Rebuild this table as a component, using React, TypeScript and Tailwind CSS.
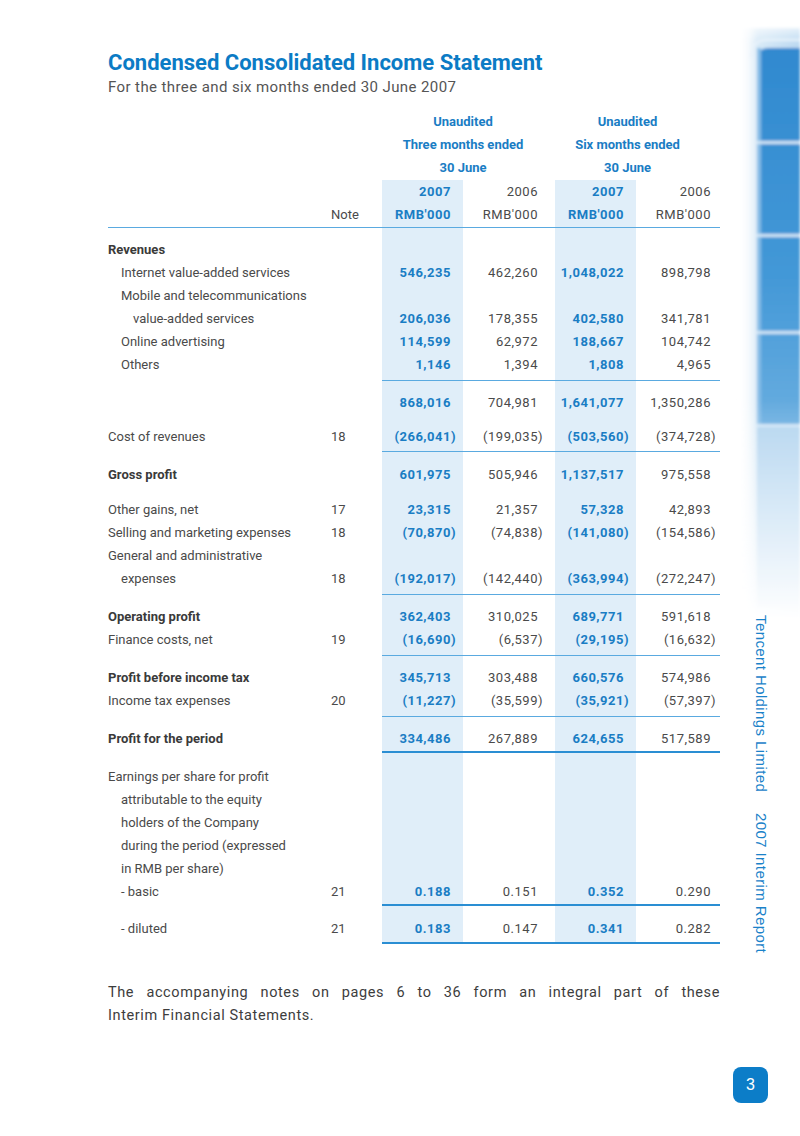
import React from "react";

type Vals = [string, string, string, string];

const COLS = "grid grid-cols-[223px_51px_81px_92px_81px_84px]";
const SHADE = "bg-[#e0eef9]";
const BLUE = "text-[#1a7dc4]";
const GRAY = "text-[#4a4a4a]";

// Number cell: closing paren hangs outside the column edge, like the print layout
function Num({ value, bold, pad }: { value: string; bold?: boolean; pad: string }) {
  const neg = value.endsWith(")");
  const body = neg ? value.slice(0, -1) : value;
  return (
    <div className={`flex justify-end items-center tracking-[0.5px] ${pad} ${bold ? `font-bold ${BLUE}` : GRAY}`}>
      <span>{body}</span>
      <span className={neg ? "" : "invisible"}>)</span>
    </div>
  );
}

function Row({
  label,
  indent = 0,
  bold,
  note,
  v,
}: {
  label?: string;
  indent?: 0 | 1 | 2;
  bold?: boolean;
  note?: string;
  v?: Vals;
}) {
  const ind = indent === 2 ? "pl-[25px]" : indent === 1 ? "pl-[13px]" : "";
  return (
    <div className={`${COLS} h-[23px] leading-[23px]`}>
      <div className={`${ind} ${bold ? "font-bold text-[#3a3a3a]" : GRAY} whitespace-nowrap`}>{label}</div>
      <div className={GRAY}>{note}</div>
      <div className={SHADE}>{v && <Num value={v[0]} bold pad="pr-[7px]" />}</div>
      <div>{v && <Num value={v[1]} pad="pr-[12px]" />}</div>
      <div className={SHADE}>{v && <Num value={v[2]} bold pad="pr-[7px]" />}</div>
      <div>{v && <Num value={v[3]} pad="pr-[4px]" />}</div>
    </div>
  );
}

function Gap({ h }: { h: string }) {
  return (
    <div className={`${COLS} ${h}`}>
      <div />
      <div />
      <div className={SHADE} />
      <div />
      <div className={SHADE} />
      <div />
    </div>
  );
}

function Rule({ thick, full }: { thick?: boolean; full?: boolean }) {
  return (
    <div className={COLS}>
      {!full && <div className="col-span-2" />}
      <div
        className={`${full ? "col-span-6" : "col-span-4"} ${
          thick ? "h-[2px] bg-[#2a8ed3]" : "h-px bg-[#5aaae0]"
        }`}
      />
    </div>
  );
}

function SideArt() {
  return (
    <svg className="absolute left-[735px] top-[20px]" width="65" height="600" viewBox="0 0 65 600">
      <defs>
        <linearGradient id="glowX" x1="0" x2="1" y1="0" y2="0">
          <stop offset="0" stopColor="#ffffff" stopOpacity="0" />
          <stop offset="0.3" stopColor="#d9eaf7" />
          <stop offset="1" stopColor="#bcd9f1" />
        </linearGradient>
        <linearGradient id="panel" x1="0" x2="0" y1="0" y2="1">
          <stop offset="0" stopColor="#3089cf" />
          <stop offset="0.6" stopColor="#4398d7" />
          <stop offset="1" stopColor="#6aaee0" />
        </linearGradient>
        <linearGradient id="fadeY" x1="0" x2="0" y1="0" y2="1">
          <stop offset="0" stopColor="#ffffff" stopOpacity="0" />
          <stop offset="1" stopColor="#ffffff" stopOpacity="1" />
        </linearGradient>
        <linearGradient id="fadeTop" x1="0" x2="0" y1="0" y2="1">
          <stop offset="0" stopColor="#ffffff" stopOpacity="1" />
          <stop offset="1" stopColor="#ffffff" stopOpacity="0" />
        </linearGradient>
        <filter id="soft" x="-20%" y="-5%" width="140%" height="110%">
          <feGaussianBlur stdDeviation="1.8" />
        </filter>
      </defs>
      <g filter="url(#soft)">
        <rect x="4" y="8" width="61" height="590" fill="url(#glowX)" />
        <path d="M22 40 Q22 28 34 28 L65 28 L65 410 L22 410 Z" fill="url(#panel)" />
        <path d="M16 38 Q16 20 32 20 L65 20" stroke="#e9f3fb" strokeWidth="2" fill="none" />
        <rect x="22" y="28" width="4" height="382" fill="#86bde7" />
        <rect x="22" y="121" width="43" height="3" fill="#d3e7f7" />
        <rect x="22" y="214" width="43" height="3" fill="#d3e7f7" />
        <rect x="22" y="311" width="43" height="3" fill="#d3e7f7" />
        <rect x="22" y="404" width="43" height="3" fill="#d3e7f7" />
        <rect x="22" y="407" width="43" height="180" fill="#b2d4ef" />
        <rect x="0" y="0" width="65" height="22" fill="url(#fadeTop)" />
        <rect x="0" y="380" width="65" height="220" fill="url(#fadeY)" />
      </g>
    </svg>
  );
}

export default function App() {
  const font = "font-['Roboto','Liberation_Sans',sans-serif]";
  return (
    <div className={`relative w-[800px] h-[1136px] bg-white ${font}`}>
      <SideArt />

      <div className="pl-[108px] pt-[49px] w-[720px]">
        <h1 className="text-[22px] leading-[28px] font-bold text-[#0b7bc5] whitespace-nowrap">
          Condensed Consolidated Income Statement
        </h1>
        <p className="text-[15px] leading-[20px] tracking-[0.4px] text-[#555]">
          For the three and six months ended 30 June 2007
        </p>

        <div className="mt-[13px] text-[13px]">
          {/* Column group headings */}
          {[
            ["Unaudited", "Unaudited"],
            ["Three months ended", "Six months ended"],
            ["30 June", "30 June"],
          ].map(([a, b], i) => (
            <div key={i} className={`${COLS} h-[23px] leading-[23px] font-bold ${BLUE}`}>
              <div className="col-span-2" />
              <div className="col-span-2 text-center pr-[11px] whitespace-nowrap">{a}</div>
              <div className="col-span-2 text-center pr-[20px] whitespace-nowrap">{b}</div>
            </div>
          ))}
          <div className="h-px" />
          <Row v={["2007", "2006", "2007", "2006"]} />
          <Row note="Note" v={["RMB'000", "RMB'000", "RMB'000", "RMB'000"]} />
          <Gap h="h-px" />
          <Rule full />
          <Gap h="h-[10px]" />

          <Row label="Revenues" bold />
          <Row label="Internet value-added services" indent={1} v={["546,235", "462,260", "1,048,022", "898,798"]} />
          <Row label="Mobile and telecommunications" indent={1} />
          <Row label="value-added services" indent={2} v={["206,036", "178,355", "402,580", "341,781"]} />
          <Row label="Online advertising" indent={1} v={["114,599", "62,972", "188,667", "104,742"]} />
          <Row label="Others" indent={1} v={["1,146", "1,394", "1,808", "4,965"]} />
          <Gap h="h-[4px]" />
          <Rule />
          <Gap h="h-[10px]" />
          <Row v={["868,016", "704,981", "1,641,077", "1,350,286"]} />
          <Gap h="h-[11px]" />
          <Row label="Cost of revenues" note="18" v={["(266,041)", "(199,035)", "(503,560)", "(374,728)"]} />
          <Gap h="h-[3px]" />
          <Rule />
          <Gap h="h-[11px]" />
          <Row label="Gross profit" bold v={["601,975", "505,946", "1,137,517", "975,558"]} />
          <Gap h="h-[12px]" />
          <Row label="Other gains, net" note="17" v={["23,315", "21,357", "57,328", "42,893"]} />
          <Row label="Selling and marketing expenses" note="18" v={["(70,870)", "(74,838)", "(141,080)", "(154,586)"]} />
          <Row label="General and administrative" />
          <Row label="expenses" indent={1} note="18" v={["(192,017)", "(142,440)", "(363,994)", "(272,247)"]} />
          <Gap h="h-[4px]" />
          <Rule />
          <Gap h="h-[10px]" />
          <Row label="Operating profit" bold v={["362,403", "310,025", "689,771", "591,618"]} />
          <Row label="Finance costs, net" note="19" v={["(16,690)", "(6,537)", "(29,195)", "(16,632)"]} />
          <Gap h="h-[4px]" />
          <Rule />
          <Gap h="h-[10px]" />
          <Row label="Profit before income tax" bold v={["345,713", "303,488", "660,576", "574,986"]} />
          <Row label="Income tax expenses" note="20" v={["(11,227)", "(35,599)", "(35,921)", "(57,397)"]} />
          <Gap h="h-[4px]" />
          <Rule />
          <Gap h="h-[10px]" />
          <Row label="Profit for the period" bold v={["334,486", "267,889", "624,655", "517,589"]} />
          <Gap h="h-px" />
          <Rule thick />
          <Gap h="h-[12px]" />
          <Row label="Earnings per share for profit" />
          <Row label="attributable to the equity" indent={1} />
          <Row label="holders of the Company" indent={1} />
          <Row label="during the period (expressed" indent={1} />
          <Row label="in RMB per share)" indent={1} />
          <Row label="- basic" indent={1} note="21" v={["0.188", "0.151", "0.352", "0.290"]} />
          <Gap h="h-px" />
          <Rule thick />
          <Gap h="h-[11px]" />
          <Row label="- diluted" indent={1} note="21" v={["0.183", "0.147", "0.341", "0.282"]} />
          <Gap h="h-[2px]" />
          <Rule thick />
        </div>

        <div className="mt-[37px] w-[612px] text-[14.5px] leading-[23px] tracking-[0.6px] text-[#3d3d3d]">
          <p className="text-justify [text-align-last:justify]">
            The accompanying notes on pages 6 to 36 form an integral part of these
          </p>
          <p>Interim Financial Statements.</p>
        </div>
      </div>

      {/* Running side title */}
      <div className="absolute left-[752px] top-[615px] [writing-mode:vertical-rl] font-['Liberation_Sans',sans-serif] text-[15px] leading-[18px] tracking-[0.4px] text-[#1a82c9] whitespace-nowrap flex gap-[21px]">
        <span>Tencent Holdings Limited</span>
        <span>2007 Interim Report</span>
      </div>

      {/* Page number */}
      <div className="absolute left-[733px] top-[1067px] w-[35px] h-[36px] rounded-[8px] bg-[#0c7dc8] flex items-center justify-center text-white text-[16px] font-['Liberation_Sans',sans-serif] font-light">
        3
      </div>
    </div>
  );
}
